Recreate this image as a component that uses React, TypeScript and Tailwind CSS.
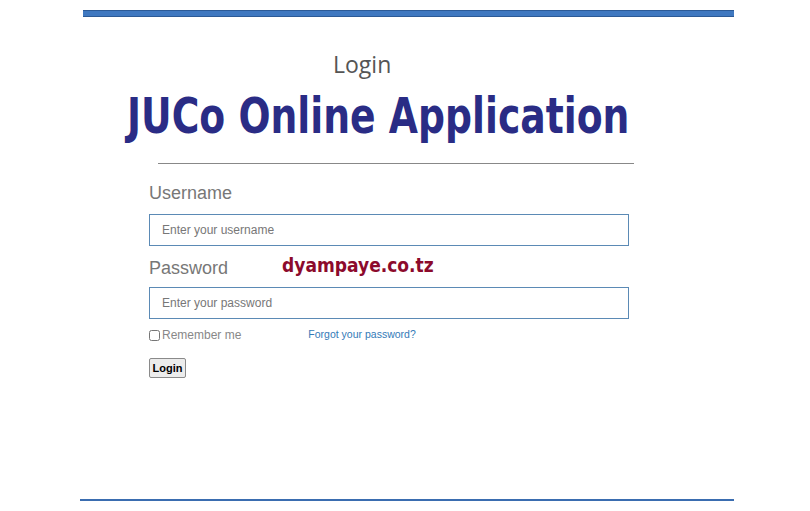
import { useState } from "react";

export default function App() {
  const [remember, setRemember] = useState(false);

  return (
    <div className="w-[810px] h-[511px] bg-white overflow-hidden" style={{ fontFamily: '"Liberation Sans", Arial, sans-serif' }}>
      <div className="ml-[83px] w-[651px] pt-[10px]">
        {/* top bar */}
        <div className="h-[7px] bg-[#3f78c0] border-y border-[#2c5a96]" />

        <div className="h-[482px] flex flex-col">
          <h2
            className="mt-[33px] ml-[250px] text-[23px] leading-[28px] text-[#555]"
            style={{ fontFamily: '"Open Sans", sans-serif' }}
          >
            Login
          </h2>
          <h1
            className="mt-[10px] ml-[44px] text-[49px] leading-[58px] font-bold text-[#2a2c85] whitespace-nowrap origin-left scale-x-[0.77]"
            style={{ fontFamily: '"DejaVu Sans", sans-serif' }}
          >
            JUCo Online Application
          </h1>
          <div className="ml-[75px] w-[476px] h-[1px] mt-[17px] bg-[#888]" />

          <form className="ml-[66px] w-[480px] mt-[18px] flex flex-col" onSubmit={(e) => e.preventDefault()}>
            <label className="text-[18px] leading-[22px] text-[#777]">Username</label>
            <input
              className="mt-[10px] h-[32px] border border-[#5b8ab5] px-[12px] text-[12px] placeholder:text-[#777] outline-none"
              placeholder="Enter your username"
            />
            <div className="mt-[11px] flex items-end">
              <label className="text-[18px] leading-[22px] text-[#777]">Password</label>
              <span
                className="ml-[54px] inline-block origin-left scale-x-[0.9] relative -top-[3px] text-[19px] leading-[22px] font-bold text-[#8c0a2c]"
                style={{ fontFamily: '"DejaVu Sans", sans-serif' }}
              >
                dyampaye.co.tz
              </span>
            </div>
            <input
              type="password"
              className="mt-[8px] h-[32px] border border-[#5b8ab5] px-[12px] text-[12px] placeholder:text-[#777] outline-none"
              placeholder="Enter your password"
            />
            <div className="mt-[8px] flex items-center h-[16px]">
              <input
                type="checkbox"
                checked={remember}
                onChange={(e) => setRemember(e.target.checked)}
                className="w-[11px] h-[11px] m-0"
              />
              <span className="ml-[2px] text-[12px] text-[#888]">Remember me</span>
              <a href="#" className="ml-[67px] text-[10.5px] text-[#337ab7]">
                Forgot your password?
              </a>
            </div>
            <div className="mt-[12px]">
              <button
                type="submit"
                className="w-[37px] h-[20px] text-[11px] font-bold leading-[18px] text-black border border-[#8a8a8a] rounded-[2px] bg-[#ececec]"
              >
                Login
              </button>
            </div>
          </form>
        </div>

        {/* bottom bar */}
        <div className="-ml-[3px] h-[2px] bg-[#3a6db0]" />
      </div>
    </div>
  );
}
